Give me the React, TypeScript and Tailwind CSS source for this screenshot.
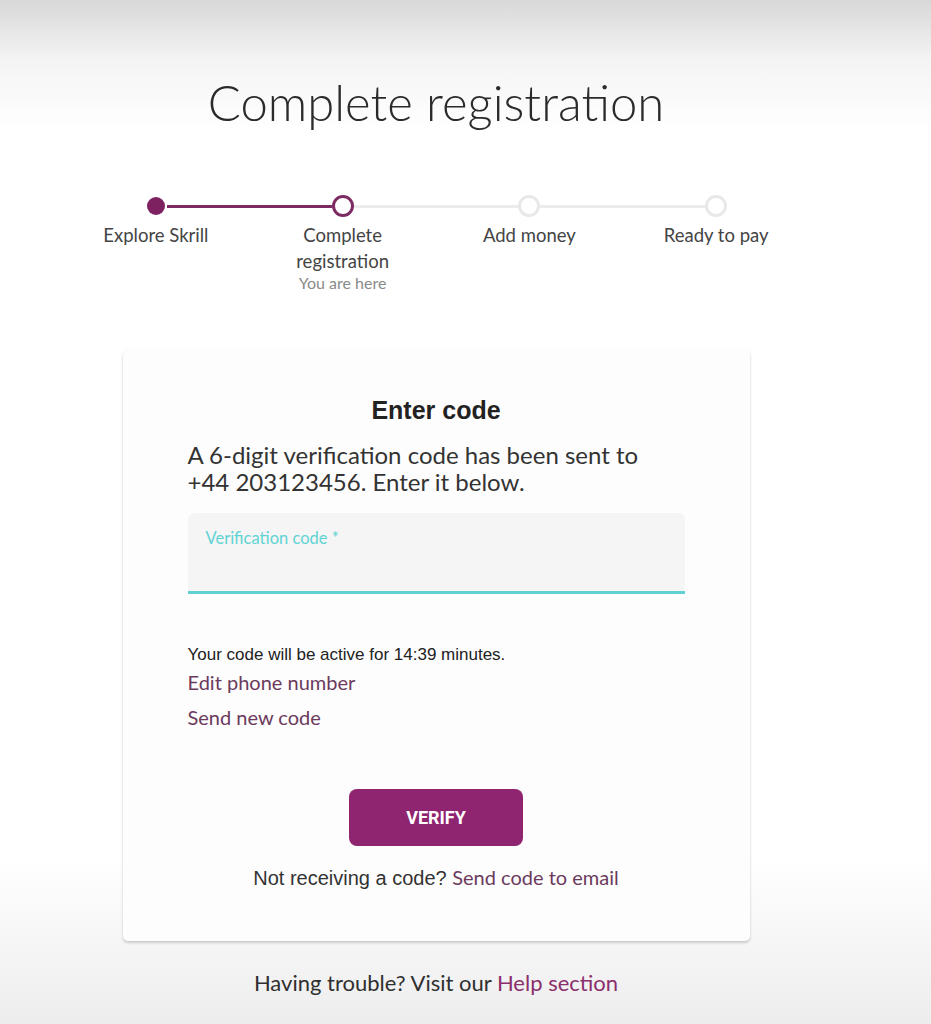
import React from 'react';

const steps = [
    { label: ['Explore Skrill'], state: 'done' },
    { label: ['Complete', 'registration'], state: 'current', sub: 'You are here' },
    { label: ['Add money'], state: 'todo' },
    { label: ['Ready to pay'], state: 'todo' },
];

const Stepper: React.FC = () => (
    <div className="grid grid-cols-4 w-[747px]">
        {steps.map((s, i) => (
            <div key={i} className="flex flex-col items-center">
                <div className="flex items-center w-full h-[22px]">
                    <div className={`flex-1 h-[3px] ${i === 0 ? '' : i <= 1 ? 'bg-[#7d2a62]' : 'bg-[#ececec]'}`} />
                    {s.state === 'done' && <div className="w-[18px] h-[18px] rounded-full bg-[#7d2161] mx-[2px]" />}
                    {s.state === 'current' && <div className="w-[22px] h-[22px] rounded-full border-[3px] border-[#7d2a62] bg-white" />}
                    {s.state === 'todo' && <div className="w-[22px] h-[22px] rounded-full border-[3px] border-[#e8e8e8] bg-white" />}
                    <div className={`flex-1 h-[3px] ${i === 3 ? '' : i === 0 ? 'bg-[#7d2a62]' : 'bg-[#ececec]'}`} />
                </div>
                <div className="mt-[5px] text-center text-[18.5px] leading-[26px] text-[#444]">
                    {s.label.map((l) => (
                        <div key={l}>{l}</div>
                    ))}
                </div>
                {s.sub && <div className="text-[16px] leading-[18px] text-[#8a8a8a]">{s.sub}</div>}
            </div>
        ))}
    </div>
);

export default function App() {
    return (
        <div className="min-h-[1024px] w-full bg-[linear-gradient(to_bottom,#d8d8d8_0px,#f4f4f4_60px,#ffffff_130px,#ffffff_860px,#ededed_1024px)] font-['Lato',sans-serif]">
            <div className="w-[872px] flex flex-col items-center">
                <h1 className="mt-[72px] text-[49px] leading-[60px] font-light text-[#2b2b2b]">Complete registration</h1>

                <div className="mt-[63px]">
                    <Stepper />
                </div>

                {/* Card */}
                <div className="mt-[58px] w-[627px] bg-[#fdfdfd] rounded-[5px] shadow-[0_2px_3px_rgba(0,0,0,0.18),0_0_2px_rgba(0,0,0,0.04)] px-[65px] pt-[45px] pb-[51px]">
                    <h2 className="text-center font-['Liberation_Sans',Arial,sans-serif] font-bold text-[25px] leading-[30px] text-[#222]">Enter code</h2>
                    <p className="mt-[16px] text-[24px] leading-[27px] text-[#333]">
                        A 6-digit verification code has been sent to<br />+44 203123456. Enter it below.
                    </p>

                    <div className="mt-[18px] h-[81px] bg-[#f5f5f5] rounded-t-[6px] border-b-[3px] border-[#5fd1d2] px-[18px] pt-[15px]">
                        <div className="text-[16.5px] leading-[20px] text-[#5fd3d3]">Verification code *</div>
                    </div>

                    <div className="mt-[51px] font-['Liberation_Sans',Arial,sans-serif] text-[17px] leading-[20px] text-[#222]">
                        Your code will be active for 14:39 minutes.
                    </div>
                    <div className="mt-[5px] text-[20px] leading-[24px] text-[#6b3a5c]">Edit phone number</div>
                    <div className="mt-[11px] text-[20px] leading-[24px] text-[#6b3a5c]">Send new code</div>

                    <div className="mt-[60px] flex justify-center">
                        <button className="w-[174px] h-[57px] rounded-[8px] bg-[#8f2470] text-white font-['Roboto',sans-serif] font-bold text-[18px]">VERIFY</button>
                    </div>
                    <div className="mt-[19px] text-center text-[20px] leading-[24px]">
                        <span className="font-['Liberation_Sans',Arial,sans-serif] text-[#333]">Not receiving a code? </span>
                        <span className="text-[#6b3a5c]">Send code to email</span>
                    </div>
                </div>

                <div className="mt-[28px] text-[22px] leading-[28px] text-[#2f2f2f]">
                    Having trouble? Visit our <span className="text-[#8a2f6c]">Help section</span>
                </div>
            </div>
        </div>
    );
}
